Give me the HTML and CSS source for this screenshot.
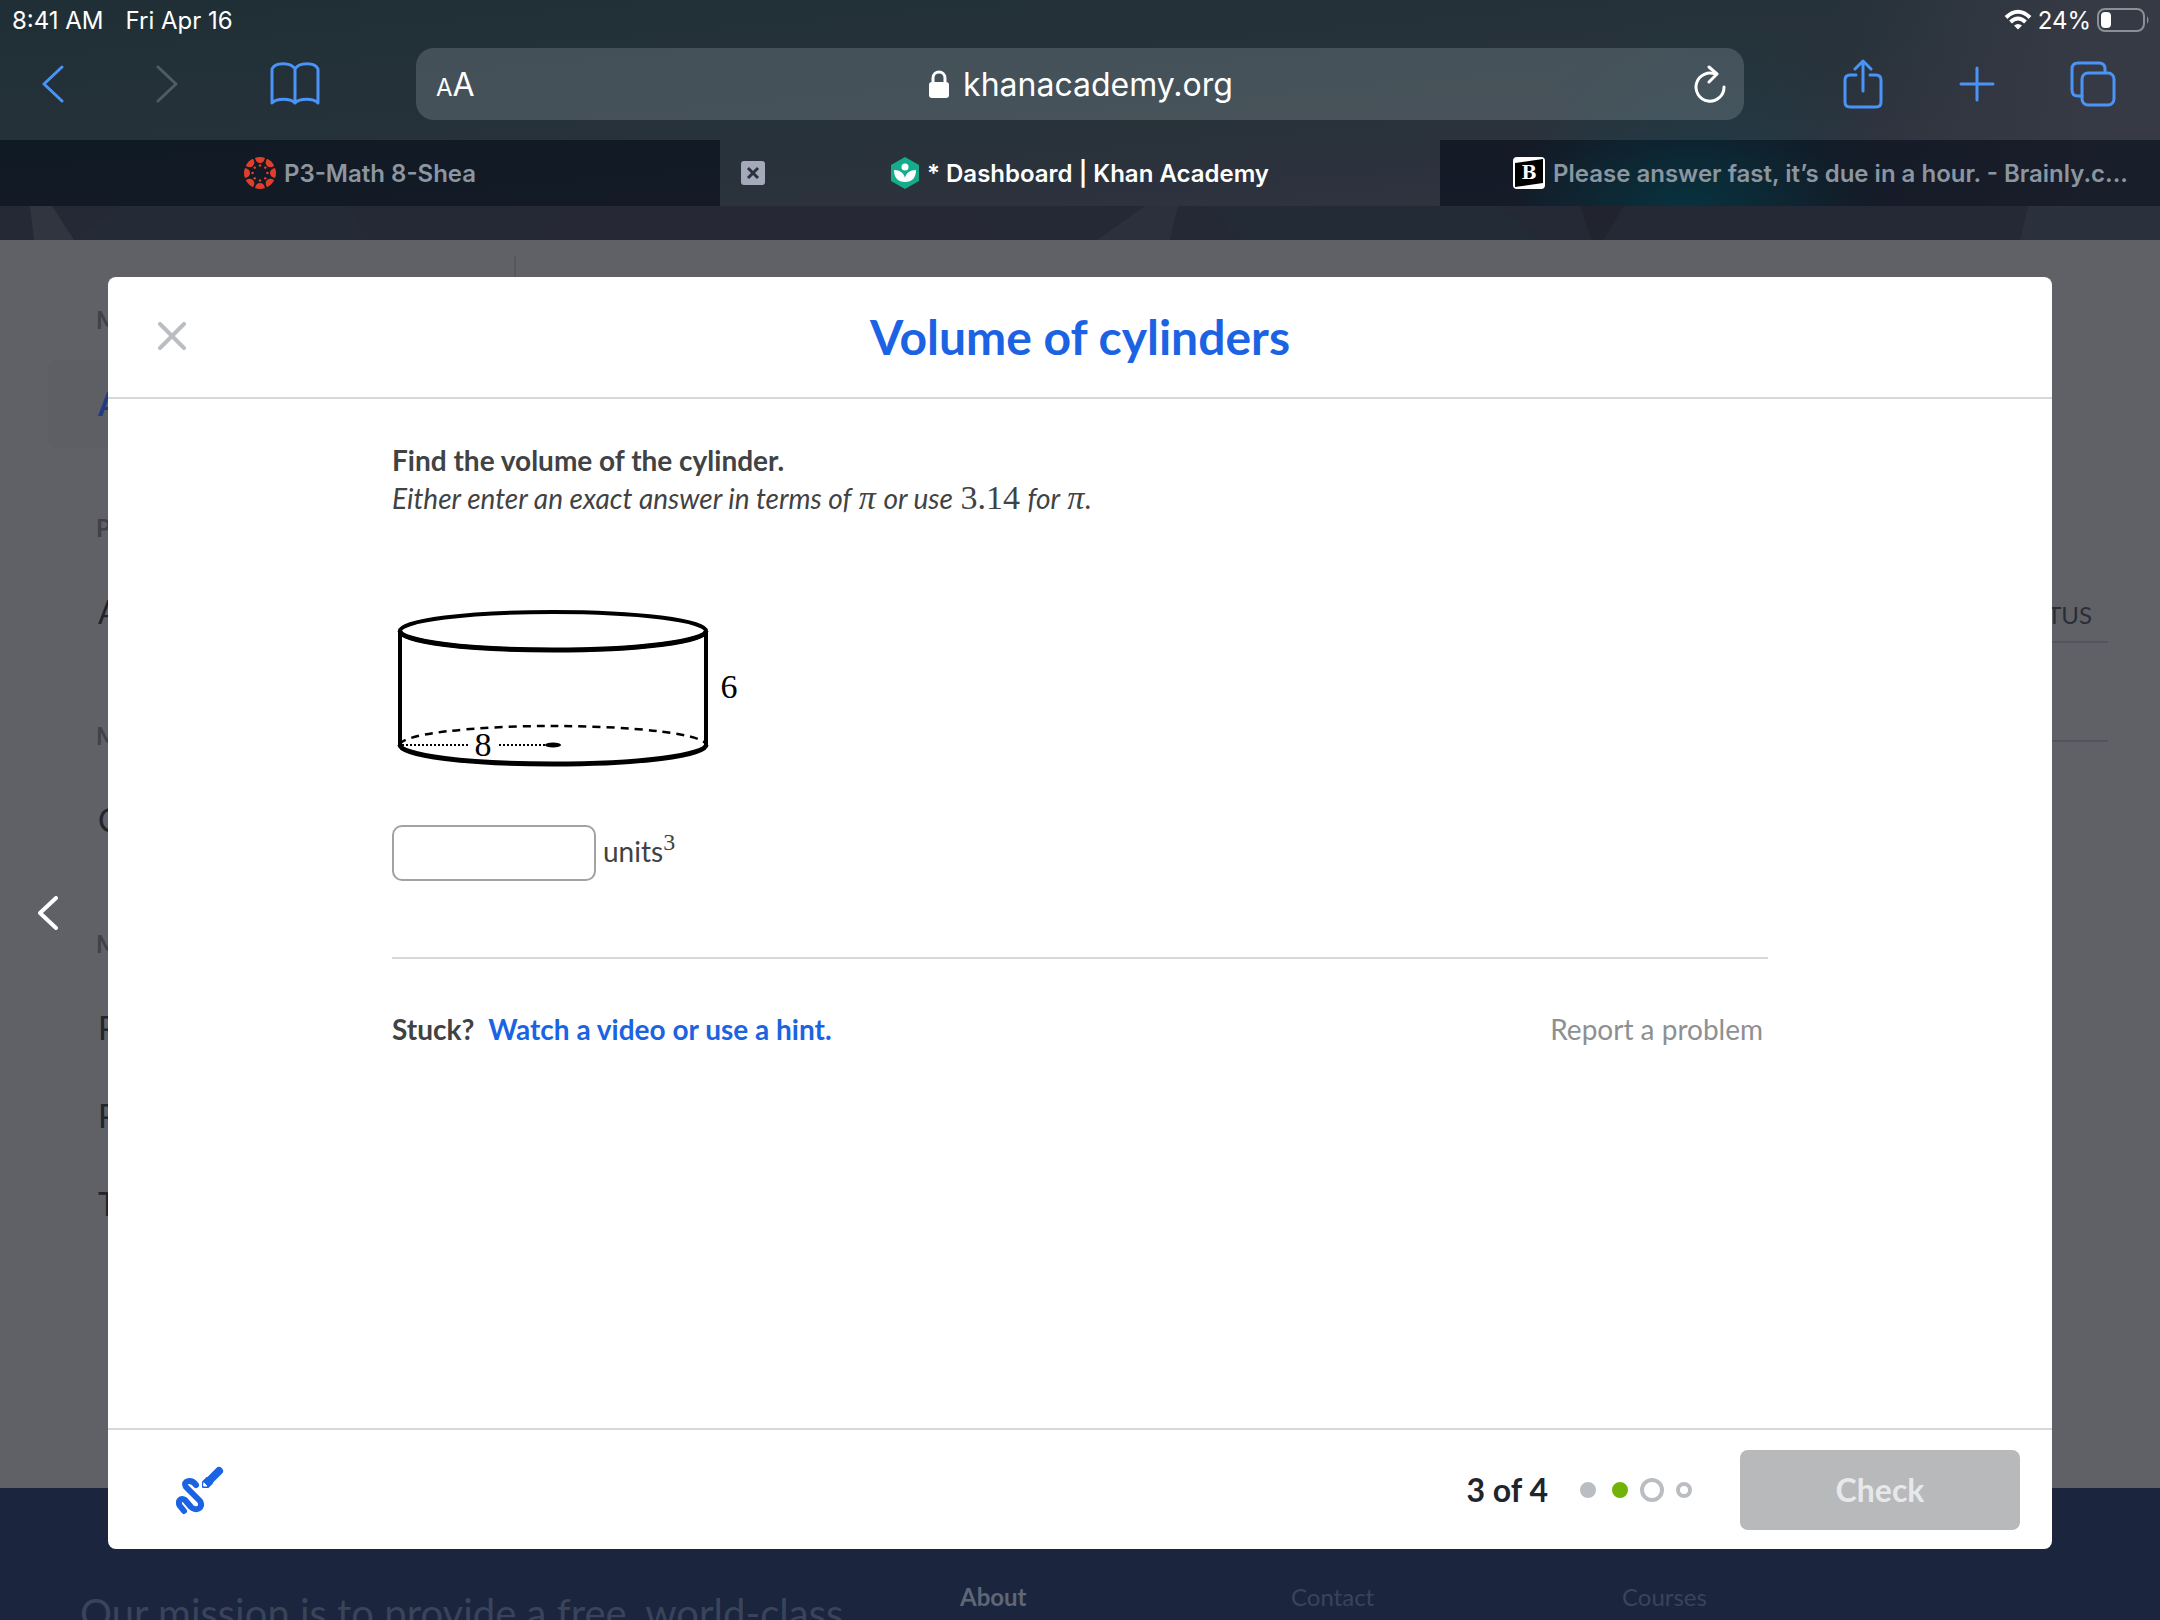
FILE: index.html
```html
<!DOCTYPE html>
<html lang="en">
<head>
  <meta charset="UTF-8" />
  <meta name="viewport" content="width=device-width, initial-scale=1.0"/>
  <title>Dashboard | Khan Academy</title>
  <link rel="stylesheet" href="styles.css">
</head>
<body>

<!-- Browser bars -->
<header class="browser">
  <div class="status-bar">
    <span>8:41 AM</span>
    <span>Fri Apr 16</span>
    <div class="status-right">
      <svg width="28" height="22" viewBox="0 0 28 22" fill="none" stroke="#fff" stroke-width="4">
        <path d="M2 8.500 Q14 -3 26 8.500" />
        <path d="M6.500 13 Q14 6 21.500 13" />
        <path d="M14 20.500 L10 16.500 Q14 13.500 18 16.500 Z" fill="#fff" stroke="none" />
      </svg>
      <span>24%</span>
      <svg width="53" height="24" viewBox="0 0 53 24" fill="none">
        <rect x="1" y="1" width="46" height="22" rx="7" stroke="#8a9095" stroke-width="2" />
        <rect x="4" y="4" width="10" height="16" rx="4" fill="#fff" />
        <path d="M50 8 Q53 12 50 16 Z" fill="#8a9095" />
      </svg>
    </div>
  </div>

  <div class="toolbar">
    <nav class="tools tools-left">
      <button class="tool" aria-label="Back">
        <svg width="22" height="38" viewBox="0 0 22 38"><path d="M20 2 L2 19 L20 36" /></svg>
      </button>
      <button class="tool tool-off" aria-label="Forward" disabled>
        <svg width="22" height="38" viewBox="0 0 22 38"><path d="M2 2 L20 19 L2 36" /></svg>
      </button>
      <button class="tool" aria-label="Bookmarks">
        <svg width="50" height="44" viewBox="0 0 50 44"><path d="M25 41 V7 C21 0 5 0 2 7 V41 C7 36 20 36 25 41 C30 36 43 36 48 41 V7 C45 0 29 0 25 7" /></svg>
      </button>
    </nav>
    <div class="address">
      <button class="text-size" aria-label="Text size"><small>A</small>A</button>
      <div class="host">
        <svg width="20" height="28" viewBox="0 0 20 28">
          <rect x="0" y="12" width="20" height="16" rx="3" fill="#fff" />
          <path d="M4 13 V8 C4 0 16 0 16 8 V13" fill="none" stroke="#fff" stroke-width="3" />
        </svg>
        <span>khanacademy.org</span>
      </div>
      <button class="reload" aria-label="Reload">
        <svg width="32" height="38" viewBox="0 0 32 38" fill="none" stroke="#fff" stroke-width="3" stroke-linecap="round" stroke-linejoin="round">
          <path d="M30 22 A14 14 0 1 1 22 9.500" />
          <path d="M15 2 L23 9 L15 17" />
        </svg>
      </button>
    </div>
    <nav class="tools tools-right">
      <button class="tool" aria-label="Share">
        <svg width="40" height="50" viewBox="0 0 40 50"><path d="M13 16 H7 Q2 16 2 21 V43 Q2 48 7 48 H33 Q38 48 38 43 V21 Q38 16 33 16 H27 M20 32 V3 M12 10 L20 2 L28 10" /></svg>
      </button>
      <button class="tool" aria-label="New tab">
        <svg width="36" height="36" viewBox="0 0 36 36"><path d="M18 2 V34 M2 18 H34" /></svg>
      </button>
      <button class="tool" aria-label="Show tabs">
        <svg width="46" height="46" viewBox="0 0 46 46"><path d="M12 35 H8 Q2 35 2 29 V8 Q2 2 8 2 H29 Q35 2 35 8 V11" /><rect x="12" y="12" width="32" height="32" rx="6" /></svg>
      </button>
    </nav>
  </div>

  <div class="tabs">
    <a href="#" class="tab">
      <svg width="32" height="32" viewBox="0 0 32 32" fill="#e13f2b">
        <g id="canvasPair">
          <path d="M11 1 Q16 -1 21 1 Q20 6 16 6 Q12 6 11 1 Z" />
          <circle cx="16" cy="8.500" r="1.300" />
        </g>
        <use href="#canvasPair" transform="rotate(45 16 16)" />
        <use href="#canvasPair" transform="rotate(90 16 16)" />
        <use href="#canvasPair" transform="rotate(135 16 16)" />
        <use href="#canvasPair" transform="rotate(180 16 16)" />
        <use href="#canvasPair" transform="rotate(225 16 16)" />
        <use href="#canvasPair" transform="rotate(270 16 16)" />
        <use href="#canvasPair" transform="rotate(315 16 16)" />
      </svg>
      <span>P3-Math 8-Shea</span>
    </a>
    <div class="tab tab-active">
      <button class="tab-close" aria-label="Close tab">
        <svg width="24" height="24" viewBox="0 0 24 24"><rect width="24" height="24" rx="3" fill="#a4aab9" /><path d="M7 7 L17 17 M17 7 L7 17" stroke="#2d323e" stroke-width="3" /></svg>
      </button>
      <svg width="28" height="32" viewBox="0 0 28 32">
        <path d="M14 0 L28 8 V24 L14 32 L0 24 V8 Z" fill="#14ad8c" />
        <circle cx="14" cy="10" r="3.500" fill="#fff" />
        <path d="M3 13 C9 13 13 16 14 21 C15 16 19 13 25 13 C25 21 21 25 14 25 C7 25 3 21 3 13 Z" fill="#fff" />
      </svg>
      <span>* Dashboard | Khan Academy</span>
    </div>
    <a href="#" class="tab">
      <svg width="32" height="32" viewBox="0 0 32 32">
        <rect width="32" height="32" rx="4" fill="#fff" />
        <path d="M2 6 L30 2 V26 L2 30 Z" fill="#000" />
        <text x="16" y="22" text-anchor="middle" class="brainly-letter">B</text>
      </svg>
      <span>Please answer fast, it’s due in a hour. - Brainly.c...</span>
    </a>
  </div>
</header>

<div class="viewport">

  <!-- Dashboard behind the dialog -->
  <div class="page">
    <svg class="hero" viewBox="0 0 2160 34" preserveAspectRatio="none">
      <path d="M30 0 H52 L74 34 H34 Z" fill="#303540" />
      <path d="M118 0 L74 34 H370 L350 0 Z" fill="#242b36" />
      <path d="M560 0 L520 34 H1000 L970 0 Z" fill="#262935" />
      <path d="M1145 0 L1097 34 H1170 L1178 0 Z" fill="#2c303d" />
      <path d="M1208 0 L1240 34 H1540 L1500 0 Z" fill="#232c36" />
      <path d="M1580 0 L1592 34 H1603 L1624 0 Z" fill="#21232e" />
      <path d="M2028 0 L2020 34 H2160 V0 Z" fill="#2a303c" />
    </svg>
    <div class="page-body">
      <aside class="sidebar">
        <h3>M</h3>
        <a href="#" class="current">A</a>
        <h3>P</h3>
        <a href="#">A</a>
        <h3>M</h3>
        <a href="#">C</a>
        <h3>M</h3>
        <a href="#">P</a>
        <a href="#">P</a>
        <a href="#">T</a>
      </aside>
      <div class="assignments">
        <div class="assignments-head">STATUS</div>
        <div class="assignments-row"></div>
      </div>
    </div>
    <footer class="site-footer">
      <p class="mission">Our mission is to provide a free, world-class</p>
      <strong>About</strong>
      <a href="#">Contact</a>
      <a href="#">Courses</a>
    </footer>
  </div>

  <!-- Exercise dialog -->
  <div class="overlay">
    <button class="previous" aria-label="Previous">
      <svg width="20" height="34" viewBox="0 0 20 34" fill="none" stroke="#fff" stroke-width="4" stroke-linecap="round" stroke-linejoin="round"><path d="M18 2 L2 17 L18 32" /></svg>
    </button>
    <main class="modal">
      <div class="modal-header">
        <button class="close" aria-label="Close">
          <svg width="28" height="28" viewBox="0 0 28 28" stroke="#babec2" stroke-width="4" stroke-linecap="round"><path d="M2 2 L26 26 M26 2 L2 26" /></svg>
        </button>
        <h1>Volume of cylinders</h1>
      </div>

      <div class="exercise">
        <p class="question">
          <strong>Find the volume of the cylinder.</strong><br>
          <em>Either enter an exact answer in terms of <span class="math pi">π</span> or use <span class="math">3.14</span> for <span class="math pi">π</span>.</em>
        </p>

        <svg class="cylinder" width="350" height="164" viewBox="0 0 350 164" fill="none" stroke="#000">
          <ellipse cx="161" cy="23" rx="153" ry="19" stroke-width="4" />
          <path d="M8 23 A153 19 0 0 0 314 23" stroke-width="5" />
          <path d="M8 23 V137 M314 23 V137" stroke-width="4" />
          <path d="M8 137 A153 19 0 0 0 314 137" stroke-width="5" />
          <path d="M8 137 A153 19 0 0 1 314 137" stroke-width="2.500" stroke-dasharray="8 6" />
          <path d="M10 137 H77 M107 137 H153" stroke-width="2" stroke-dasharray="2 2" />
          <ellipse cx="161" cy="137" rx="8" ry="2.500" fill="#000" stroke="none" />
          <text x="91" y="148" text-anchor="middle">8</text>
          <text x="337" y="90" text-anchor="middle">6</text>
        </svg>

        <div class="answer">
          <input type="text" id="answer">
          <label for="answer">units<sup>3</sup></label>
        </div>

        <div class="help">
          <strong>Stuck?</strong>
          <a href="#" class="hint">Watch a video or use a hint.</a>
          <a href="#" class="report">Report a problem</a>
        </div>
      </div>

      <div class="modal-footer">
        <button class="scratchpad" aria-label="Scratchpad">
          <svg width="48" height="50" viewBox="0 0 48 50" fill="none" stroke="#1b63e3" stroke-linecap="round" stroke-linejoin="round">
            <path d="M20 20 C16 14 6 15 10 22 L24 36 C28 43 20 47 15 42 L9 35 C5 32 1 36 4 41 L8 46" stroke-width="6" />
            <path d="M33 16 L43 6" stroke-width="8" />
            <path d="M27 22 V17 L31 13 L36 18 L32 22 Z" fill="#1b63e3" stroke-width="2" />
            <path d="M28 18 L31 21 L28 21 Z" fill="#fff" stroke="#fff" stroke-width="1" />
          </svg>
        </button>
        <span class="progress">3 of 4</span>
        <div class="dots">
          <i class="dot dot-done"></i>
          <i class="dot dot-right"></i>
          <i class="dot dot-current"></i>
          <i class="dot"></i>
        </div>
        <button class="check" disabled>Check</button>
      </div>
    </main>
  </div>
</div>

</body>
</html>
```
FILE: styles.css
```css
* {
  box-sizing: border-box;
}

body {
  font-family: Lato, "Liberation Sans", sans-serif;
  margin: 0;
  display: flex;
  flex-direction: column;
  min-height: 100vh;
}

button {
  background: none;
  border: none;
  padding: 0;
  font: inherit;
  color: inherit;
}

a {
  text-decoration: none;
  color: inherit;
}

svg {
  display: block;
  flex: none;
}

/* Browser bars */
.browser {
  font-family: Inter, "Liberation Sans", sans-serif;
  color: #fff;
  background:
    radial-gradient(circle at 79% 100%, rgba(0, 80, 88, 0.3), rgba(0, 80, 88, 0) 200px),
    linear-gradient(90deg, rgba(56, 59, 70, 0) 85%, rgba(56, 59, 70, 0.9) 97%),
    linear-gradient(175deg, #1f2f35, #27323a 50%, #2f333f 85%, #2f333f);
}

.status-bar {
  display: flex;
  align-items: center;
  gap: 22px;
  height: 40px;
  padding: 0 10px 0 12px;
  font-size: 24px;
}

.status-right {
  display: flex;
  align-items: center;
  gap: 6px;
  margin-left: auto;
}

.toolbar {
  display: grid;
  grid-template-columns: 416px 1fr 416px;
  align-items: center;
  padding: 8px 0 20px;
}

.tools {
  display: flex;
  align-items: center;
}

.tools-left {
  gap: 92px;
  padding-left: 42px;
}

.tools-right {
  justify-content: space-between;
  padding: 0 44px 0 99px;
}

.tool svg {
  fill: none;
  stroke: #4a94f8;
  stroke-width: 3;
  stroke-linecap: round;
  stroke-linejoin: round;
}

.tool-off svg {
  stroke: #525b62;
}

.address {
  display: grid;
  grid-template-columns: 1fr auto 1fr;
  align-items: center;
  height: 72px;
  padding: 0 18px 0 20px;
  border-radius: 18px;
  background-color: rgba(118, 130, 138, 0.4);
  font-size: 32px;
}

.text-size {
  justify-self: start;
}

.text-size small {
  font-size: 24px;
}

.host {
  display: flex;
  align-items: center;
  gap: 14px;
}

.reload {
  justify-self: end;
}

.tabs {
  display: grid;
  grid-template-columns: repeat(3, minmax(0, 1fr));
  height: 66px;
  font-size: 24px;
  font-weight: 600;
}

.tab {
  position: relative;
  display: flex;
  align-items: center;
  justify-content: center;
  gap: 8px;
  padding-left: 32px;
  padding-right: 32px;
  white-space: nowrap;
  color: #8b96a1;
  background-color: rgba(0, 8, 20, 0.55);
}

.tab:last-child {
  justify-content: flex-end;
  background-image: radial-gradient(ellipse 180px 100px at 34% 100%, rgba(0, 70, 82, 0.5), rgba(0, 70, 82, 0));
}

.tab-active {
  color: #fff;
  background: none;
}

.tab-close {
  position: absolute;
  left: 21px;
}

.brainly-letter {
  font: bold 18px "DejaVu Serif", serif;
  fill: #fff;
}

/* Dashboard */
.viewport {
  position: relative;
  flex: 1;
  display: flex;
  overflow: hidden;
}

.page {
  flex: 1;
  display: flex;
  flex-direction: column;
  background-color: #606167;
}

.hero {
  width: 100%;
  height: 34px;
  background-color: #252935;
}

.page-body {
  flex: 1;
  display: flex;
  padding: 16px 52px 0 48px;
}

.sidebar {
  width: 468px;
  padding-top: 46px;
  border-right: 2px solid #56575d;
}

.sidebar h3 {
  margin: 0;
  padding-left: 48px;
  font-size: 24px;
  line-height: 36px;
  color: #3f4049;
}

.sidebar a {
  display: block;
  padding-left: 50px;
  font-size: 32px;
  line-height: 88px;
  color: #21242c;
}

.sidebar h3 + a {
  margin-top: 22px;
}

.sidebar a + h3 {
  margin-top: 62px;
}

.sidebar .current {
  font-weight: bold;
  color: #1d3d80;
  background-color: #5e5f64;
  border-radius: 8px;
}

.assignments {
  flex: 1;
  padding-top: 343px;
  font-size: 24px;
  text-align: right;
  color: #2a2d36;
}

.assignments-head {
  padding: 0 16px 10px;
  line-height: 32px;
  border-bottom: 2px solid #54555c;
}

.assignments-row {
  height: 99px;
  border-bottom: 2px solid #54555c;
}

.site-footer {
  display: grid;
  grid-template-columns: 880px 331px 331px 1fr;
  align-items: start;
  height: 132px;
  padding: 95px 80px 0;
  overflow: hidden;
  font-size: 24px;
  line-height: 28px;
  color: #39445a;
  background-color: #1b253d;
}

.site-footer strong {
  color: #5f6777;
}

.mission {
  margin: 6px 0 0;
  font-size: 40px;
  line-height: 48px;
}

/* Exercise dialog */
.overlay {
  position: absolute;
  inset: 0;
  display: grid;
  grid-template-columns: 108px 1fr 108px;
  padding: 71px 0;
}

.previous {
  display: flex;
  justify-content: flex-start;
  align-items: center;
  padding-left: 38px;
}

.modal {
  display: flex;
  flex-direction: column;
  background: white;
  border-radius: 8px;
}

.modal-header {
  display: grid;
  grid-template-columns: 1fr auto 1fr;
  align-items: center;
  height: 122px;
  padding: 0 50px 2px;
  border-bottom: 2px solid #d6d8da;
}

.close {
  justify-self: start;
}

.modal-header h1 {
  margin: 0;
  font-size: 48px;
  color: #1b63e3;
}

.exercise {
  flex: 1;
  width: 100%;
  max-width: 1376px;
  margin: 0 auto;
  padding-top: 42px;
  font-size: 28px;
  color: #404244;
}

.question {
  margin: 0 0 91px;
  line-height: 38px;
}

.math {
  margin: 0 1px;
  font-family: "Liberation Serif", serif;
  font-size: 34px;
  font-style: normal;
  line-height: 1;
}

.pi {
  font-style: italic;
}

.cylinder text {
  font-family: "Liberation Serif", serif;
  font-size: 34px;
  fill: #000;
  stroke: none;
}

.answer {
  display: flex;
  align-items: center;
  gap: 7px;
  margin-top: 53px;
  padding-bottom: 76px;
  border-bottom: 2px solid #d6d8da;
}

.answer input {
  width: 204px;
  height: 56px;
  padding: 0 12px;
  border: 2px solid #a0a2a5;
  border-radius: 10px;
  font: inherit;
}

.answer label {
  padding-bottom: 4px;
}

.answer sup {
  font-family: "Liberation Serif", serif;
  font-size: 24px;
  line-height: 0;
  vertical-align: 12px;
}

.help {
  display: flex;
  gap: 14px;
  padding: 51px 5px 0 0;
  line-height: 38px;
}

.hint {
  font-weight: bold;
  color: #1b63e3;
}

.report {
  margin-left: auto;
  color: #8d9093;
}

.modal-footer {
  display: flex;
  align-items: center;
  height: 121px;
  padding: 0 32px 0 68px;
  border-top: 2px solid #d6d8da;
}

.progress {
  margin-left: auto;
  margin-right: 30px;
  font-size: 32px;
  font-weight: bold;
  color: #21242c;
}

.dots {
  display: flex;
  align-items: center;
  gap: 12px;
  margin-right: 46px;
}

.dot {
  width: 16px;
  height: 16px;
  margin: 0 2px;
  border: 4px solid #babec2;
  border-radius: 50%;
}

.dot-done {
  background-color: #babec2;
}

.dot-right {
  border-color: #71b307;
  background-color: #71b307;
}

.dot-current {
  width: 24px;
  height: 24px;
  margin: 0 -2px;
}

.check {
  width: 280px;
  height: 80px;
  border-radius: 8px;
  font-size: 32px;
  font-weight: bold;
  color: #e7e8ea;
  background-color: #b8b9bb;
}
```
